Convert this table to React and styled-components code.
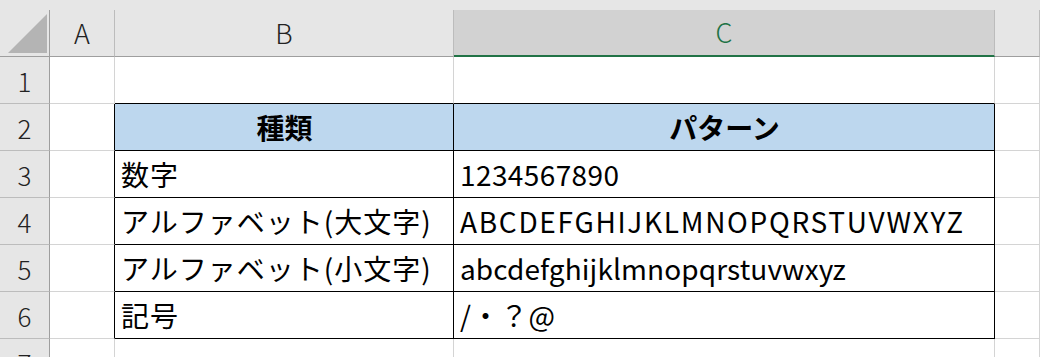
import styled, { createGlobalStyle } from 'styled-components'

const GlobalStyle = createGlobalStyle`
  html, body {
    margin: 0;
    padding: 0;
    background: #ffffff;
    overflow: hidden;
  }
  body {
    font-family: "Noto Sans CJK JP", "Noto Sans", sans-serif;
  }
`

const GRID = '#d4d4d4'
const HEAD_LINE = '#bcbcbc'
const HEAD_EDGE = '#9e9e9e'
const INK = '#000000'

const Sheet = styled.div`
  display: grid;
  grid-template-columns: 50px 65px 339px 541px 1fr;
  grid-template-rows: 57px repeat(7, 47px);
  width: 1040px;
  height: 357px;
  overflow: hidden;
  background: #e6e6e6;
`

const Corner = styled.div`
  display: flex;
  align-items: flex-end;
  justify-content: flex-end;
  padding: 0 3px 3px 0;
  border-bottom: 1px solid ${HEAD_EDGE};
  box-sizing: border-box;
  position: relative;
  &::after {
    content: '';
    position: absolute;
    right: 0;
    top: 10px;
    bottom: 0;
    width: 1px;
    background: ${HEAD_EDGE};
  }
`

const ColHead = styled.div`
  margin-top: 10px;
  display: flex;
  align-items: center;
  justify-content: center;
  box-sizing: border-box;
  border-right: 1px solid ${HEAD_LINE};
  border-bottom: ${(p) => (p.$selected ? '2px solid #217346' : `1px solid ${HEAD_EDGE}`)};
  background: ${(p) => (p.$selected ? '#d2d2d2' : '#e6e6e6')};
  color: ${(p) => (p.$selected ? '#217346' : '#222222')};
  font-size: 27px;
  font-weight: 300;
  padding-bottom: 2px;
`

const RowHead = styled.div`
  display: flex;
  align-items: center;
  justify-content: center;
  box-sizing: border-box;
  background: #e6e6e6;
  border-right: 1px solid ${HEAD_EDGE};
  border-bottom: 1px solid ${HEAD_LINE};
  color: #222222;
  font-size: 26px;
  font-weight: 300;
`

const Cell = styled.div`
  display: flex;
  align-items: center;
  justify-content: ${(p) => (p.$head ? 'center' : 'flex-start')};
  box-sizing: border-box;
  padding: 0 5px 0 6px;
  background: ${(p) => (p.$head ? '#bdd7ee' : '#ffffff')};
  border-right: 1px solid ${(p) => (p.$inkRight ? INK : GRID)};
  border-bottom: 1px solid ${(p) => (p.$inkBottom ? INK : GRID)};
  color: #000000;
  font-size: 28px;
  font-weight: ${(p) => (p.$head ? 700 : 400)};
  letter-spacing: ${(p) => p.$track || 0}px;
  white-space: nowrap;
  overflow: hidden;
`

// D is scrolled mostly out of view, only its left strip shows
const columns = [
  { key: 'A', label: 'A' },
  { key: 'B', label: 'B' },
  { key: 'C', label: 'C' },
  { key: 'D', label: '' },
]
const selectedCol = 'C'

// rows of the little table sitting in B2:C6, each value with its tracking
const table = {
  2: [['種類', 0], ['パターン', 0]],
  3: [['数字', 1], ['1234567890', 0.4]],
  4: [['アルファベット(大文字)', 1], ['ABCDEFGHIJKLMNOPQRSTUVWXYZ', 1.7]],
  5: [['アルファベット(小文字)', 1], ['abcdefghijklmnopqrstuvwxyz', 0.1]],
  6: [['記号', 1], ['/・？@', 0.5]],
}

const inTable = (row) => row >= 2 && row <= 6

function CornerMark() {
  return (
    <svg width="39" height="39" viewBox="0 0 39 39">
      <polygon points="0,39 39,0 39,39" fill="#b4b4b4" />
    </svg>
  )
}

function SheetRow({ row }) {
  const values = table[row]
  return (
    <>
      <RowHead>{row}</RowHead>
      <Cell $inkRight={inTable(row)} />
      {[0, 1].map((i) => (
        <Cell
          key={i}
          $head={row === 2}
          $track={values ? values[i][1] : 0}
          $inkRight={inTable(row)}
          $inkBottom={row === 1 || inTable(row)}
        >
          {values ? values[i][0] : ''}
        </Cell>
      ))}
      <Cell />
    </>
  )
}

export default function App() {
  return (
    <>
      <GlobalStyle />
      <Sheet>
        <Corner>
          <CornerMark />
        </Corner>
        {columns.map((c) => (
          <ColHead key={c.key} $selected={c.key === selectedCol}>
            {c.label}
          </ColHead>
        ))}
        {[1, 2, 3, 4, 5, 6, 7].map((r) => (
          <SheetRow key={r} row={r} />
        ))}
      </Sheet>
    </>
  )
}
